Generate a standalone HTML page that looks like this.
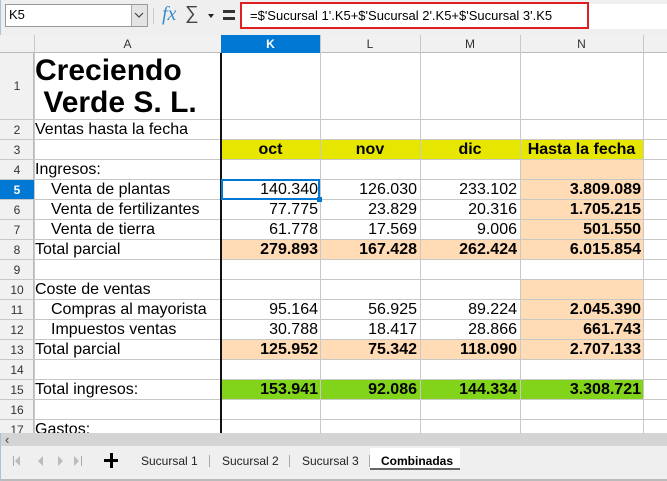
<!DOCTYPE html>
<html><head><meta charset="utf-8"><style>
*{margin:0;padding:0;box-sizing:border-box}
body{width:667px;height:481px;overflow:hidden;background:#fff;font-family:"Liberation Sans",sans-serif;position:relative}
.a{position:absolute}
.t{position:absolute;font-size:16px;line-height:20px;white-space:nowrap;color:#000}
.r{text-align:right}
.b{font-weight:bold}
.hl{position:absolute;left:0;width:667px;height:1px;background:#c8c8c8}
.vl{position:absolute;top:35px;width:1px;height:398px;background:#c8c8c8}
.rn{position:absolute;left:0;width:34px;text-align:center;font-size:12px;color:#333;line-height:20px}
.ch{position:absolute;top:35px;height:18px;line-height:18px;text-align:center;font-size:12px;color:#333}
</style></head><body>
<!-- toolbar -->
<div class="a" style="left:0;top:0;width:667px;height:35px;background:#efefef"></div>
<div class="a" style="left:0;top:0;width:1px;height:481px;background:#a9c3df"></div>
<div class="a" style="left:5px;top:4px;width:143px;height:23px;background:#fff;border:1px solid #999"></div>
<div class="t" style="left:9px;top:5px;font-size:13px">K5</div>
<div class="a" style="left:131px;top:5px;width:16px;height:21px;background:#e4e4e4;border-left:1px solid #aaa"></div>
<svg class="a" style="left:133px;top:11px" width="12" height="8"><path d="M2 2 L6 6 L10 2" stroke="#444" fill="none" stroke-width="1.2"/></svg>
<div class="a" style="left:153px;top:8px;width:1px;height:16px;background:#ccc"></div>
<div class="t" style="left:162px;top:4px;font-family:'Liberation Serif',serif;font-style:italic;font-size:20px;color:#3a8ccc">fx</div>
<div class="t" style="left:185px;top:4px;font-size:19px;color:#444">∑</div>
<div class="a" style="left:208px;top:14px;width:0;height:0;border-left:3px solid transparent;border-right:3px solid transparent;border-top:4px solid #222"></div>
<div class="a" style="left:223px;top:10px;width:12px;height:3px;background:#333"></div>
<div class="a" style="left:223px;top:17px;width:12px;height:3px;background:#333"></div>
<div class="a" style="left:240px;top:2px;width:349px;height:27px;background:#fff;border:2px solid #e02020"></div>
<div class="t" style="left:250px;top:6px;font-size:13px">=$'Sucursal 1'.K5+$'Sucursal 2'.K5+$'Sucursal 3'.K5</div>
<div class="a" style="left:589px;top:4px;width:78px;height:25px;background:#fff"></div>
<!-- headers -->
<div class="a" style="left:0;top:35px;width:667px;height:18px;background:#f1f1f1;border-bottom:1px solid #bbb"></div>
<div class="a" style="left:0;top:53px;width:34px;height:380px;background:#f1f1f1;border-right:1px solid #bbb"></div>
<div class="a" style="left:221px;top:35px;width:99px;height:18px;background:#0078d4"></div>
<div class="ch" style="left:34px;width:187px">A</div>
<div class="ch" style="left:221px;width:99px;color:#fff;font-weight:bold">K</div>
<div class="ch" style="left:320px;width:100px">L</div>
<div class="ch" style="left:420px;width:100px">M</div>
<div class="ch" style="left:520px;width:123px">N</div>
<!-- fills -->
<div class="a" style="left:221px;top:140px;width:422px;height:20px;background:#e6e600"></div>
<div class="a" style="left:520px;top:160px;width:123px;height:80px;background:#ffdbb6"></div>
<div class="a" style="left:221px;top:240px;width:422px;height:20px;background:#ffdbb6"></div>
<div class="a" style="left:520px;top:280px;width:123px;height:60px;background:#ffdbb6"></div>
<div class="a" style="left:221px;top:340px;width:422px;height:20px;background:#ffdbb6"></div>
<div class="a" style="left:221px;top:380px;width:422px;height:20px;background:#81d41a"></div>
<div class="a" style="left:0;top:180px;width:34px;height:20px;background:#0078d4"></div>
<!-- grid lines -->
<div class="hl" style="top:119px"></div>
<div class="hl" style="top:139px"></div><div class="hl" style="top:159px"></div><div class="hl" style="top:179px"></div>
<div class="hl" style="top:199px"></div><div class="hl" style="top:219px"></div><div class="hl" style="top:239px"></div>
<div class="hl" style="top:259px"></div><div class="hl" style="top:279px"></div><div class="hl" style="top:299px"></div>
<div class="hl" style="top:319px"></div><div class="hl" style="top:339px"></div><div class="hl" style="top:359px"></div>
<div class="hl" style="top:379px"></div><div class="hl" style="top:399px"></div><div class="hl" style="top:419px"></div>
<div class="vl" style="left:34px"></div><div class="vl" style="left:320px"></div><div class="vl" style="left:420px"></div>
<div class="vl" style="left:520px"></div><div class="vl" style="left:643px"></div>
<div class="a" style="left:220px;top:53px;width:2px;height:380px;background:#111"></div>
<!-- row numbers -->
<div class="rn" style="top:76px">1</div>
<div class="rn" style="top:120px">2</div><div class="rn" style="top:140px">3</div><div class="rn" style="top:160px">4</div>
<div class="rn" style="top:180px;color:#fff;font-weight:bold">5</div><div class="rn" style="top:200px">6</div><div class="rn" style="top:220px">7</div>
<div class="rn" style="top:240px">8</div><div class="rn" style="top:260px">9</div><div class="rn" style="top:280px">10</div>
<div class="rn" style="top:300px">11</div><div class="rn" style="top:320px">12</div><div class="rn" style="top:340px">13</div>
<div class="rn" style="top:360px">14</div><div class="rn" style="top:380px">15</div><div class="rn" style="top:400px">16</div>
<div class="rn" style="top:420px">17</div>
<!-- A column text -->
<div class="t b" style="left:35px;top:55px;font-size:30px;line-height:32px">Creciendo<br>&nbsp;Verde S. L.</div>
<div class="t" style="left:35px;top:120px">Ventas hasta la fecha</div>
<div class="t" style="left:35px;top:160px">Ingresos:</div>
<div class="t" style="left:51px;top:180px">Venta de plantas</div>
<div class="t" style="left:51px;top:200px">Venta de fertilizantes</div>
<div class="t" style="left:51px;top:220px">Venta de tierra</div>
<div class="t" style="left:35px;top:240px">Total parcial</div>
<div class="t" style="left:35px;top:280px">Coste de ventas</div>
<div class="t" style="left:51px;top:300px">Compras al mayorista</div>
<div class="t" style="left:51px;top:320px">Impuestos ventas</div>
<div class="t" style="left:35px;top:340px">Total parcial</div>
<div class="t" style="left:35px;top:380px">Total ingresos:</div>
<div class="t" style="left:35px;top:420px">Gastos:</div>
<!-- headers row 3 -->
<div class="t b" style="left:221px;width:99px;top:140px;text-align:center">oct</div>
<div class="t b" style="left:320px;width:100px;top:140px;text-align:center">nov</div>
<div class="t b" style="left:420px;width:100px;top:140px;text-align:center">dic</div>
<div class="t b" style="left:520px;width:123px;top:140px;text-align:center">Hasta la fecha</div>
<!-- numbers -->
<div class="t r" style="left:221px;width:97px;top:180px">140.340</div>
<div class="t r" style="left:320px;width:97px;top:180px">126.030</div>
<div class="t r" style="left:420px;width:97px;top:180px">233.102</div>
<div class="t r b" style="left:520px;width:121px;top:180px">3.809.089</div>
<div class="t r" style="left:221px;width:97px;top:200px">77.775</div>
<div class="t r" style="left:320px;width:97px;top:200px">23.829</div>
<div class="t r" style="left:420px;width:97px;top:200px">20.316</div>
<div class="t r b" style="left:520px;width:121px;top:200px">1.705.215</div>
<div class="t r" style="left:221px;width:97px;top:220px">61.778</div>
<div class="t r" style="left:320px;width:97px;top:220px">17.569</div>
<div class="t r" style="left:420px;width:97px;top:220px">9.006</div>
<div class="t r b" style="left:520px;width:121px;top:220px">501.550</div>
<div class="t r b" style="left:221px;width:97px;top:240px">279.893</div>
<div class="t r b" style="left:320px;width:97px;top:240px">167.428</div>
<div class="t r b" style="left:420px;width:97px;top:240px">262.424</div>
<div class="t r b" style="left:520px;width:121px;top:240px">6.015.854</div>
<div class="t r" style="left:221px;width:97px;top:300px">95.164</div>
<div class="t r" style="left:320px;width:97px;top:300px">56.925</div>
<div class="t r" style="left:420px;width:97px;top:300px">89.224</div>
<div class="t r b" style="left:520px;width:121px;top:300px">2.045.390</div>
<div class="t r" style="left:221px;width:97px;top:320px">30.788</div>
<div class="t r" style="left:320px;width:97px;top:320px">18.417</div>
<div class="t r" style="left:420px;width:97px;top:320px">28.866</div>
<div class="t r b" style="left:520px;width:121px;top:320px">661.743</div>
<div class="t r b" style="left:221px;width:97px;top:340px">125.952</div>
<div class="t r b" style="left:320px;width:97px;top:340px">75.342</div>
<div class="t r b" style="left:420px;width:97px;top:340px">118.090</div>
<div class="t r b" style="left:520px;width:121px;top:340px">2.707.133</div>
<div class="t r b" style="left:221px;width:97px;top:380px">153.941</div>
<div class="t r b" style="left:320px;width:97px;top:380px">92.086</div>
<div class="t r b" style="left:420px;width:97px;top:380px">144.334</div>
<div class="t r b" style="left:520px;width:121px;top:380px">3.308.721</div>
<!-- selection -->
<div class="a" style="left:221px;top:179px;width:99px;height:21px;border:2px solid #0078d4"></div>
<div class="a" style="left:317px;top:197px;width:5px;height:5px;background:#0078d4"></div>
<!-- scrollbar -->
<div class="a" style="left:1px;top:433px;width:666px;height:13px;background:#d4d4d4"></div>
<div class="t" style="left:5px;top:430px;font-size:13px;color:#444">‹</div>
<!-- tabs -->
<div class="a" style="left:1px;top:446px;width:666px;height:35px;background:#efefef"></div>
<div class="a" style="left:1px;top:479px;width:666px;height:2px;background:#bbb"></div>
<svg class="a" style="left:12px;top:454px" width="80" height="14">
<rect x="1" y="2" width="1" height="10" fill="#aaa"/><path d="M8 2 L3 7 L8 12Z" fill="#bbb"/>
<path d="M31 2 L26 7 L31 12Z" fill="#bbb"/>
<path d="M46 2 L51 7 L46 12Z" fill="#bbb"/>
<path d="M62 2 L67 7 L62 12Z" fill="#bbb"/><rect x="69" y="2" width="1" height="10" fill="#aaa"/>
</svg>
<div class="a" style="left:104px;top:459px;width:14px;height:3px;background:#000"></div>
<div class="a" style="left:109.5px;top:453px;width:3px;height:15px;background:#000"></div>
<div class="t" style="left:141px;top:451px;font-size:12px;color:#222">Sucursal 1</div>
<div class="a" style="left:209px;top:455px;width:1px;height:12px;background:#aaa"></div>
<div class="t" style="left:222px;top:451px;font-size:12px;color:#222">Sucursal 2</div>
<div class="a" style="left:289px;top:455px;width:1px;height:12px;background:#aaa"></div>
<div class="t" style="left:302px;top:451px;font-size:12px;color:#222">Sucursal 3</div>
<div class="a" style="left:369px;top:455px;width:1px;height:12px;background:#aaa"></div>
<div class="a" style="left:370px;top:448px;width:90px;height:22px;background:#fff"></div>
<div class="a" style="left:370px;top:468px;width:90px;height:2px;background:#666"></div>
<div class="t b" style="left:381px;top:451px;font-size:12px">Combinadas</div>
</body></html>
